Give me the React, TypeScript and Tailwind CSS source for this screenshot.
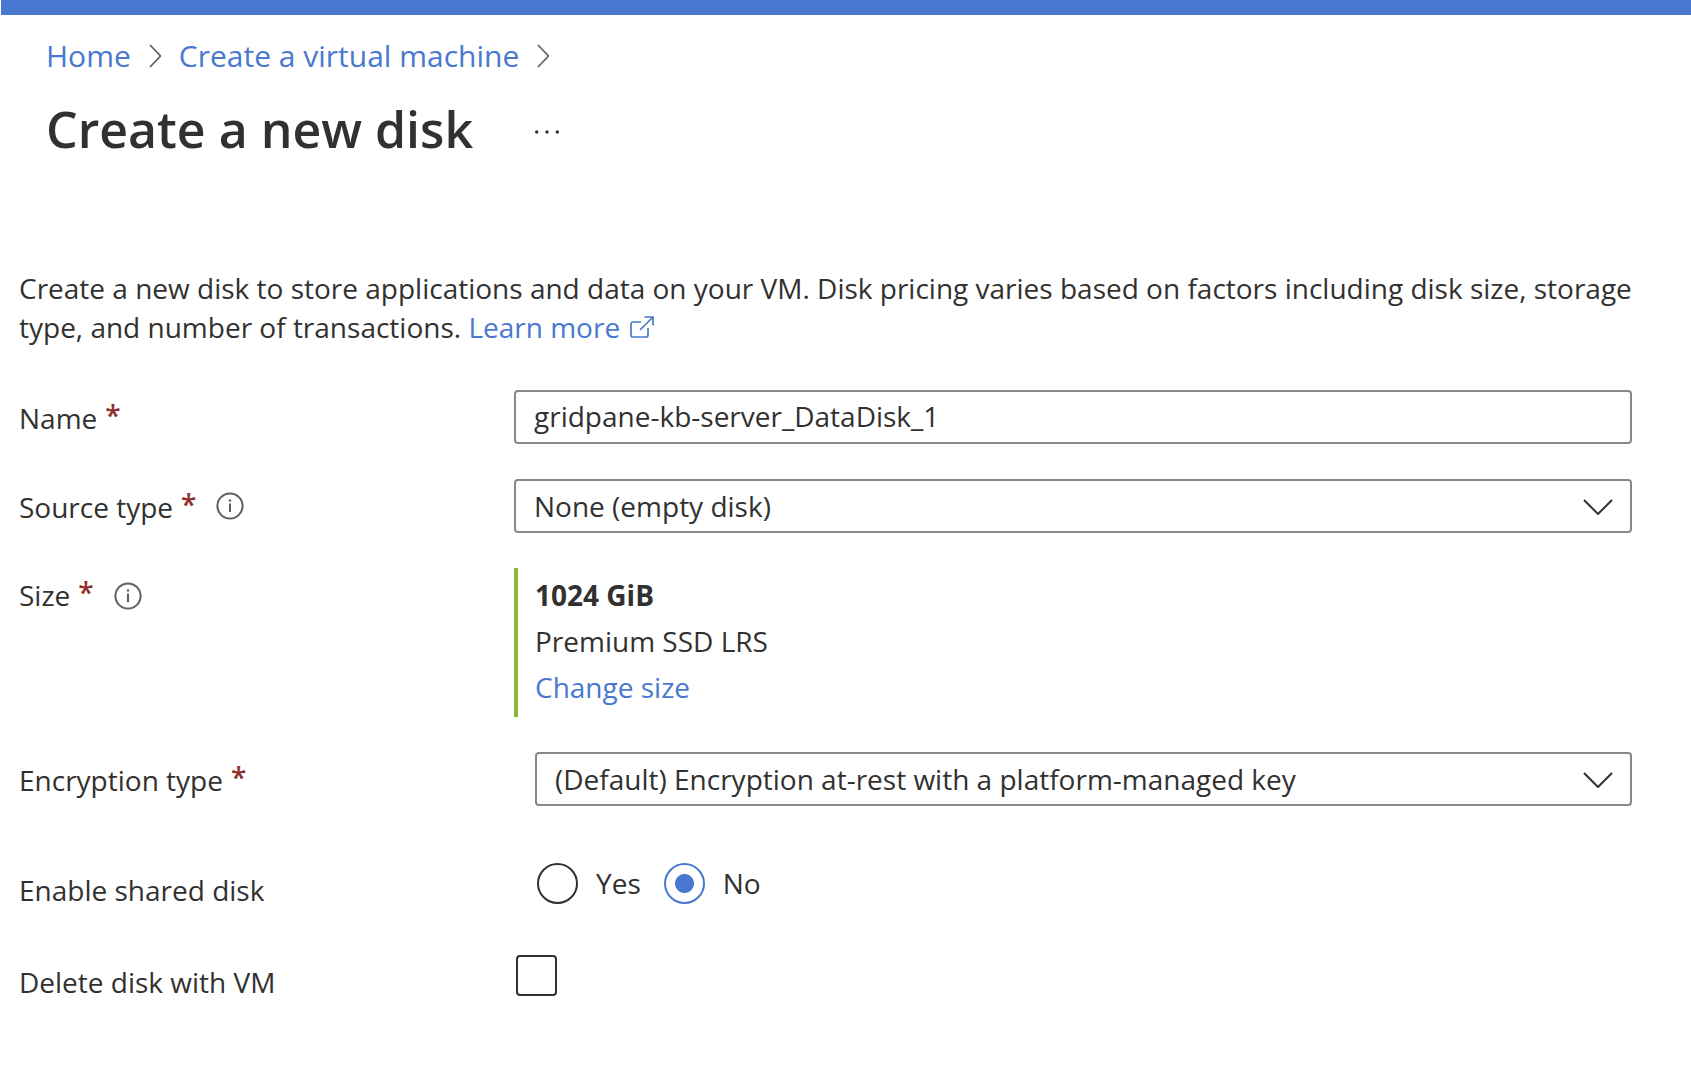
import { useState } from "react";
import type { ReactNode } from "react";

function Crumb() {
  return (
    <svg className="h-6 w-3 shrink-0" viewBox="0 0 12 24" fill="none" stroke="#605e5c" strokeWidth="1.600" aria-hidden="true">
      <path d="M1 1l10.500 11L1 23" />
    </svg>
  );
}

function InfoButton({ label }: { label: string }) {
  return (
    <button type="button" aria-label={label} className="ml-5 shrink-0">
      <svg className="size-7" viewBox="0 0 28 28" fill="none" stroke="#605e5c" aria-hidden="true">
        <circle cx="14" cy="14" r="12.600" strokeWidth="2" />
        <path d="M14 11.500v8.500" strokeWidth="2" />
        <circle cx="14" cy="8.500" r="1.200" fill="#605e5c" stroke="none" />
      </svg>
    </button>
  );
}

function Required() {
  return <span className="ml-2 align-[3px] leading-none font-semibold text-[#8e2f2c]">*</span>;
}

function Label({ id, children, required }: { id?: string; children: ReactNode; required?: boolean }) {
  return (
    <label htmlFor={id} className="pt-0.5">
      {children}
      {required && <Required />}
    </label>
  );
}

function Dropdown({ id, options }: { id: string; options: string[] }) {
  return (
    <div className="relative">
      <select
        id={id}
        className="block h-[54px] w-full appearance-none rounded-[4px] border-2 border-[#8a8886] bg-white px-[18px] text-[#323130]"
      >
        {options.map((o) => (
          <option key={o}>{o}</option>
        ))}
      </select>
      <svg
        className="pointer-events-none absolute top-5 right-[19px] h-4 w-[30px]"
        viewBox="0 0 30 16"
        fill="none"
        stroke="#323130"
        strokeWidth="2"
        aria-hidden="true"
      >
        <path d="M1 1l14 14L29 1" />
      </svg>
    </div>
  );
}

function Radio({ label, checked, onChange }: { label: string; checked: boolean; onChange: () => void }) {
  return (
    <label className="flex items-center gap-[18px]">
      <input
        type="radio"
        name="shared"
        checked={checked}
        onChange={onChange}
        className="size-[41px] appearance-none rounded-full border-2 border-[#323130] bg-white checked:border-[#4878cf] checked:bg-[radial-gradient(circle,#4878cf_9px,transparent_10px)]"
      />
      {label}
    </label>
  );
}

const link = "text-[#4878cf] hover:underline";
const row = "grid grid-cols-[495px_minmax(0,1fr)]";

export default function App() {
  const [shared, setShared] = useState(false);
  return (
    <div className="min-h-screen bg-white font-['Open_Sans','Noto_Sans',sans-serif] text-[28px] leading-[39px] text-[#323130]">
      <div className="ml-px h-[15px] bg-[#4878cf]" />
      <header className="px-[46px] pt-5">
        <nav aria-label="Breadcrumb" className="flex items-center gap-[18px] text-[30px] leading-[42px]">
          <a href="#home" className={link}>Home</a>
          <Crumb />
          <a href="#vm" className={link}>Create a virtual machine</a>
          <Crumb />
        </nav>
        <div className="mt-[17px] flex items-center gap-[62px]">
          <h1 className="text-[50px] leading-[70px] font-semibold">Create a new disk</h1>
          <button type="button" aria-label="More actions" className="pt-1.5">
            <svg className="h-1 w-6" viewBox="0 0 24 4" fill="#323130" aria-hidden="true">
              <circle cx="1.700" cy="2" r="1.700" />
              <circle cx="12" cy="2" r="1.700" />
              <circle cx="22.300" cy="2" r="1.700" />
            </svg>
          </button>
        </div>
      </header>

      <main className="mt-[105px] pr-[59px] pl-[19px]">
        <p>
          Create a new disk to store applications and data on your VM. Disk pricing varies based on factors including disk size,
          storage type, and number of transactions.{" "}
          <a href="#learn" className={`${link} whitespace-nowrap`}>
            Learn more
            <svg className="ml-2.5 inline-block h-[22px] w-6 align-baseline" viewBox="0 0 24 22" fill="none" stroke="#4878cf" strokeWidth="1.700" aria-hidden="true">
              <path d="M11 6H3a2 2 0 0 0-2 2v11a2 2 0 0 0 2 2h13a2 2 0 0 0 2-2v-7M14.500 1H23v8.500M23 1L10 14" />
            </svg>
          </a>
        </p>

        <form className="mt-[43px] flex flex-col gap-[35px]">
          <div className={`${row} items-center`}>
            <Label id="name" required>Name</Label>
            <input
              id="name"
              type="text"
              defaultValue="gridpane-kb-server_DataDisk_1"
              className="h-[54px] w-full rounded-[4px] border-2 border-[#8a8886] px-[18px] pb-0.5"
            />
          </div>
          <div className={`${row} items-center`}>
            <div className="flex items-center">
              <Label id="source" required>Source type</Label>
              <InfoButton label="About source type" />
            </div>
            <Dropdown id="source" options={["None (empty disk)", "Snapshot", "Storage blob"]} />
          </div>
          <div className={row}>
            <div className="flex items-center self-start pt-2">
              <span>Size<Required /></span>
              <InfoButton label="About size" />
            </div>
            <div className="border-l-4 border-[#8cb63c] pt-1 pb-[7px] pl-[17px] leading-[46px]">
              <p className="font-bold">1024 GiB</p>
              <p>Premium SSD LRS</p>
              <p><a href="#size" className={link}>Change size</a></p>
            </div>
          </div>
          <div className={`${row} items-center`}>
            <Label id="encryption" required>Encryption type</Label>
            <div className="pl-[21px]">
              <Dropdown
                id="encryption"
                options={["(Default) Encryption at-rest with a platform-managed key", "Encryption at-rest with a customer-managed key"]}
              />
            </div>
          </div>
          <div role="radiogroup" aria-labelledby="shared-label" className={`${row} mt-[22px] items-start`}>
            <span id="shared-label" className="pt-2">Enable shared disk</span>
            <div className="flex gap-[23px] pl-[23px]">
              <Radio label="Yes" checked={shared} onChange={() => setShared(true)} />
              <Radio label="No" checked={!shared} onChange={() => setShared(false)} />
            </div>
          </div>
          <div className={`${row} mt-[10px] items-start`}>
            <label htmlFor="delete" className="pt-2">Delete disk with VM</label>
            <input
              id="delete"
              type="checkbox"
              className="ml-0.5 size-[41px] appearance-none rounded-[4px] border-2 border-[#323130] checked:bg-[#4878cf]"
            />
          </div>
        </form>
      </main>
    </div>
  );
}
